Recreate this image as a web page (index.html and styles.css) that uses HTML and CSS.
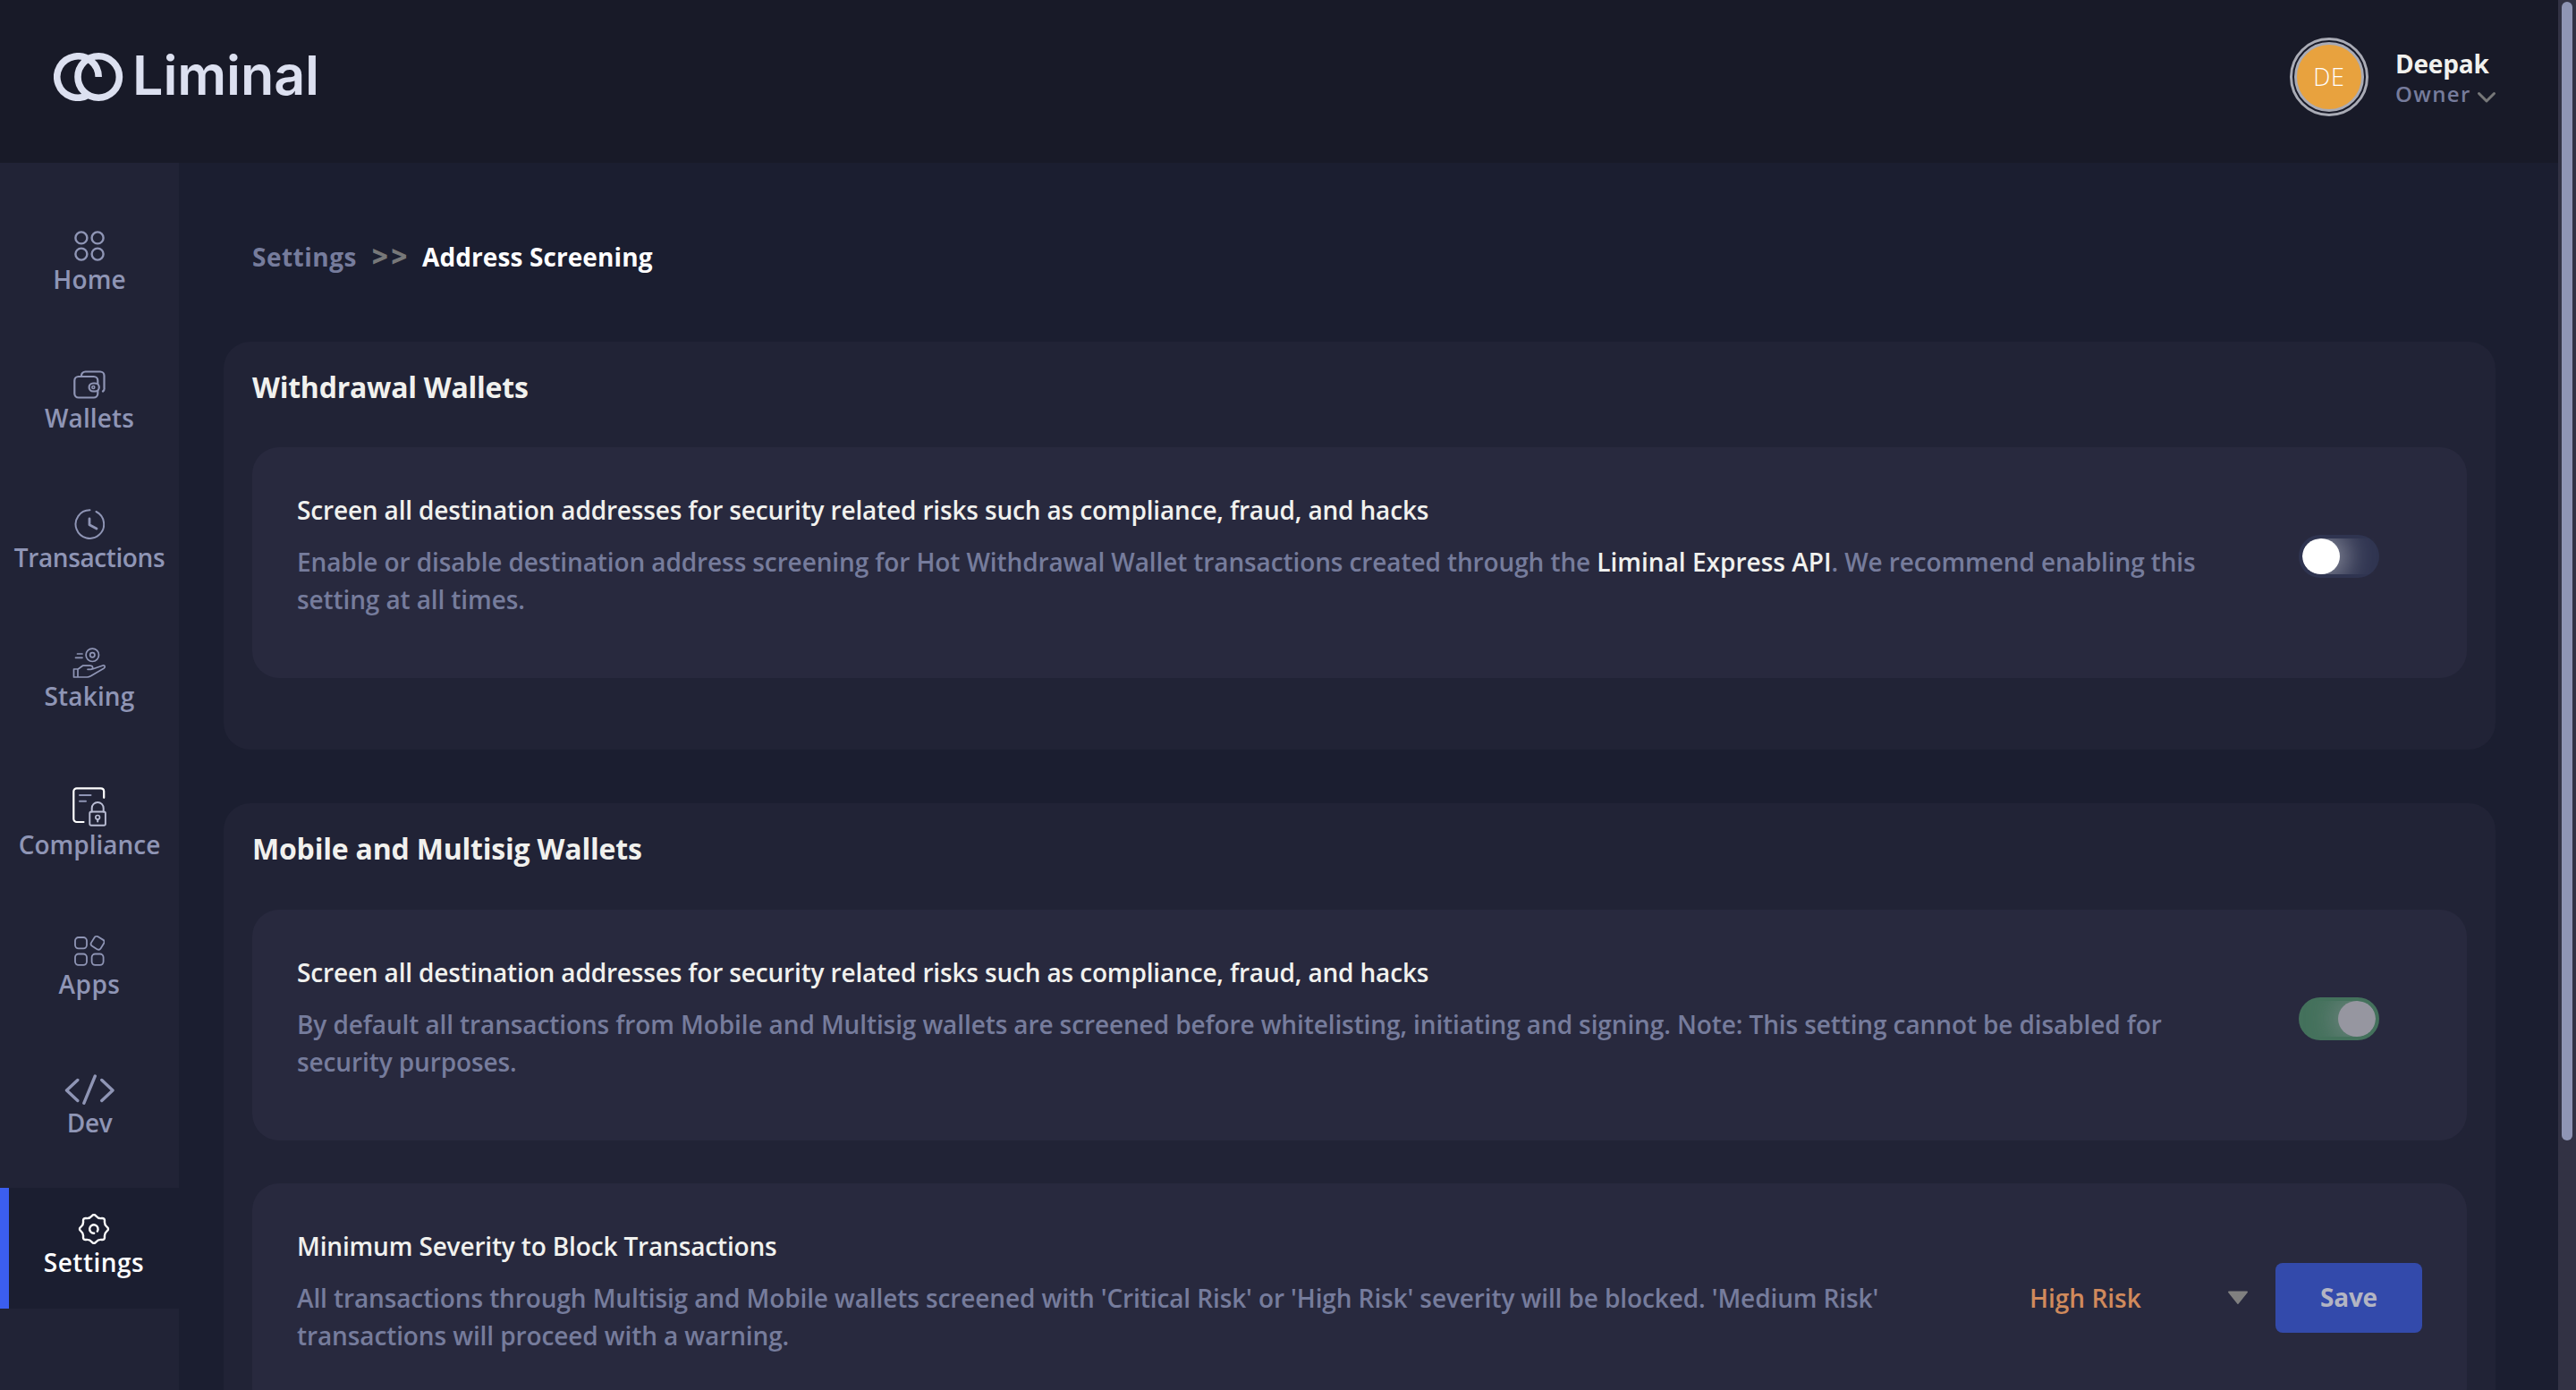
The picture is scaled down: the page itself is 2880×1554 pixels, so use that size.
FILE: index.html
```html
<!DOCTYPE html>
<html lang="en">
<head>
<meta charset="utf-8">
<title>Liminal – Address Screening</title>
<link rel="stylesheet" href="styles.css">
</head>
<body>
<div class="page">
  <div class="app">
    <header class="topbar">
      <div class="logo">
        <svg class="logo-mark" width="78" height="54" viewBox="0 0 78 54" fill="none" stroke="#dce0f0" stroke-width="7.6">
          <path d="M50.2 27A23.2 23.2 0 1 0 38.6 47.1"/>
          <circle cx="50.2" cy="27" r="23.2"/>
        </svg>
        <span class="logo-text">Liminal</span>
      </div>
      <div class="user">
        <div class="avatar"><div class="avatar-face">DE</div></div>
        <div class="user-info">
          <div class="user-name">Deepak</div>
          <div class="user-role">Owner
            <svg width="22" height="14" viewBox="0 0 22 14" fill="none" stroke="#777879" stroke-width="3" stroke-linecap="round" stroke-linejoin="round"><path d="M2.5 2.500L11 11L19.500 2.500"/></svg>
          </div>
        </div>
      </div>
    </header>
    <div class="main">
      <nav class="sidebar">
        <a class="nav-item">
          <svg width="34" height="34" viewBox="0 0 34 34" fill="none" stroke="currentColor" stroke-width="2.4"><circle cx="7.900" cy="7.900" r="6.500"/><circle cx="26.100" cy="7.900" r="6.500"/><circle cx="7.900" cy="26.100" r="6.500"/><circle cx="26.100" cy="26.100" r="6.500"/></svg>
          <span class="nav-label">Home</span>
        </a>
        <a class="nav-item">
          <svg width="36" height="34" viewBox="0 0 36 34" fill="none" stroke="currentColor" stroke-width="2.200" stroke-linecap="round">
            <rect x="1.300" y="8" width="26" height="23.500" rx="4.500"/>
            <path d="M9 7.500V7A4.500 4.500 0 0 1 13.500 2.500H30A4.500 4.500 0 0 1 34.500 7V20.500A4 4 0 0 1 33 24.500"/>
            <rect x="17.600" y="15.500" width="11.200" height="9" rx="4.500" fill="#212336"/>
            <circle cx="22.300" cy="20" r="1.500" stroke-width="1.600"/>
          </svg>
          <span class="nav-label">Wallets</span>
        </a>
        <a class="nav-item">
          <svg width="34" height="34" viewBox="0 0 34 34" fill="none" stroke="currentColor" stroke-width="2" stroke-linecap="round" stroke-linejoin="round">
            <path d="M17.500 1.300A15.800 15.800 0 1 0 24.500 3"/>
            <path d="M17 10.800V17.800L25 22" stroke-width="2.800"/>
          </svg>
          <span class="nav-label tight">Transactions</span>
        </a>
        <a class="nav-item">
          <svg width="38" height="34" viewBox="0 0 38 34" fill="none" stroke="currentColor" stroke-width="1.700" stroke-linecap="round" stroke-linejoin="round">
            <circle cx="22.300" cy="8.300" r="7.200"/><circle cx="22.300" cy="8.300" r="2.600"/>
            <path d="M5.500 7H11M3.500 11.300H11"/>
            <path d="M1.500 24H6V33H1.500ZM6 24.300L11.500 20.200H19.500C23.500 20.200 23.500 24.300 20.500 24.300H17M22.500 24L34 20C36.500 19.500 37 22 35 23.300L20.500 31.800C19 32.700 18 33 16.500 33H6"/>
          </svg>
          <span class="nav-label">Staking</span>
        </a>
        <a class="nav-item tall">
          <svg width="38" height="44" viewBox="0 0 38 44" fill="none" stroke="currentColor" stroke-linecap="round" stroke-linejoin="round">
            <path d="M35.200 11.800V4.500A3.500 3.500 0 0 0 31.700 1.300H5A3.500 3.500 0 0 0 1.300 4.800V35.500A3.500 3.500 0 0 0 4.800 39H12.500" stroke="#fff" stroke-width="2.200"/>
            <path d="M8 9H20.500M8 15.700H15" stroke-width="2"/>
            <rect x="19.300" y="27.500" width="17.600" height="15.300" rx="1.800" stroke="#b9bdd4" stroke-width="1.900"/>
            <path d="M21.700 27.500V23.500A6.500 6.500 0 0 1 34.700 23.500V27.500" stroke="#b9bdd4" stroke-width="2"/>
            <circle cx="28.200" cy="33.800" r="2.300" stroke="#b9bdd4" stroke-width="1.700"/><path d="M28.200 36.300V38.500" stroke="#b9bdd4" stroke-width="2"/>
          </svg>
          <span class="nav-label snug">Compliance</span>
        </a>
        <a class="nav-item">
          <svg width="34" height="34" viewBox="0 0 34 34" fill="none" stroke="currentColor" stroke-width="1.800">
            <rect x="1" y="2" width="13" height="12.400" rx="3.800"/>
            <rect x="19.900" y="2" width="12.400" height="12.400" rx="3" transform="rotate(32 26.100 8.200)"/>
            <rect x="1" y="20.500" width="13" height="12.400" rx="3.800"/>
            <rect x="19.600" y="20.500" width="13" height="12.400" rx="3.800"/>
          </svg>
          <span class="nav-label wide">Apps</span>
        </a>
        <a class="nav-item">
          <svg width="56" height="34" viewBox="0 0 56 34" fill="none" stroke="currentColor" stroke-width="3.400" stroke-linecap="round" stroke-linejoin="round"><path d="M14.800 6.500L2.500 18L14.800 29.500M41.800 6.500L54 18L41.800 29.500M34.300 2L21.800 32.300"/></svg>
          <span class="nav-label tight">Dev</span>
        </a>
        <a class="nav-item active">
          <svg width="36" height="34" viewBox="0 1 36 34" fill="none" stroke="currentColor" stroke-width="2.400" stroke-linecap="round" stroke-linejoin="round">
            <path d="M32.530 15.610Q35.500 18 32.530 20.390T29.960 26.580T26.580 29.960T20.390 32.530T15.610 32.530T9.420 29.960T6.040 26.580T3.470 20.390T3.470 15.610T6.040 9.420T9.420 6.040T15.610 3.470T20.390 3.470T26.580 6.040T29.960 9.420T32.530 15.610Z"/>
            <path d="M21.800 20.600A4.700 4.700 0 1 0 18.200 22.700"/>
          </svg>
          <span class="nav-label wide">Settings</span>
        </a>
      </nav>
      <main class="content">
        <div class="breadcrumb">
          <span class="crumb">Settings</span><span class="crumb-sep">&gt;&gt;</span><span class="crumb-current">Address Screening</span>
        </div>

        <section class="panel">
          <h2 class="panel-title">Withdrawal Wallets</h2>
          <div class="card">
            <div class="card-text">
              <h3 class="card-title">Screen all destination addresses for security related risks such as compliance, fraud, and hacks</h3>
              <p class="card-desc">Enable or disable destination address screening for Hot Withdrawal Wallet transactions created through the <strong class="mark">Liminal Express API</strong>. We recommend enabling this<br>setting at all times.</p>
            </div>
            <div class="toggle"><div class="toggle-track"><div class="toggle-knob"></div></div></div>
          </div>
        </section>

        <section class="panel second">
          <h2 class="panel-title">Mobile and Multisig Wallets</h2>
          <div class="card">
            <div class="card-text">
              <h3 class="card-title">Screen all destination addresses for security related risks such as compliance, fraud, and hacks</h3>
              <p class="card-desc">By default all transactions from Mobile and Multisig wallets are screened before whitelisting, initiating and signing. Note: This setting cannot be disabled for<br>security purposes.</p>
            </div>
            <div class="toggle on"><div class="toggle-track"><div class="toggle-knob"></div></div></div>
          </div>
          <div class="card">
            <div class="card-text">
              <h3 class="card-title">Minimum Severity to Block Transactions</h3>
              <p class="card-desc">All transactions through Multisig and Mobile wallets screened with 'Critical Risk' or 'High Risk' severity will be blocked. 'Medium Risk'<br>transactions will proceed with a warning.</p>
            </div>
            <div class="severity">
              <div class="select"><span>High Risk</span>
                <svg width="24" height="16" viewBox="0 0 24 16"><path d="M2 1.500H22L12 14Z" fill="#808080" stroke="#808080" stroke-width="2" stroke-linejoin="round"/></svg>
              </div>
              <button class="save">Save</button>
            </div>
          </div>
        </section>
      </main>
    </div>
  </div>
  <div class="scrollbar"><div class="scroll-thumb"></div></div>
</div>
</body>
</html>
```
FILE: styles.css
```css
* { box-sizing: border-box; }

body {
  margin: 0;
  background: #1b1e30;
  color: #f1f1ee;
  font-family: "Open Sans", sans-serif;
  font-size: 28px;
  line-height: 42px;
  overflow: hidden;
}

.page { display: flex; height: 1554px; overflow: hidden; }
.app { flex: 1; display: flex; flex-direction: column; min-width: 0; }

/* Header */
.topbar {
  flex: none;
  height: 182px;
  padding: 42px 70px 0 60px;
  background: #181a28;
  display: flex;
  justify-content: space-between;
  align-items: flex-start;
}
.logo { display: flex; padding-top: 17px; }
.logo-text {
  margin: -12px 0 0 10px;
  font: 620 61px/74px Inter, sans-serif;
  letter-spacing: -0.1px;
  color: #dce0f0;
}
.user { display: flex; }
.avatar {
  width: 88px;
  height: 88px;
  padding: 2px;
  border: 3px solid #a9abb5;
  border-radius: 50%;
}
.avatar-face {
  width: 78px;
  height: 78px;
  border: 3px solid #a9abb5;
  border-radius: 50%;
  background: #e8a23e;
  color: #fff;
  font-weight: 360;
  font-size: 27px;
  line-height: 71px;
  letter-spacing: 0.7px;
  text-align: center;
}
.user-info { width: 113px; margin: 0 -1px 0 30px; padding-top: 12px; }
.user-name { font-weight: 700; line-height: 34px; letter-spacing: -0.2px; }
.user-role {
  display: flex;
  align-items: center;
  justify-content: space-between;
  font-weight: 600;
  font-size: 24px;
  line-height: 34px;
  letter-spacing: 1.35px;
  color: #767c9c;
}
.user-role svg { margin-top: 7px; }

/* Navigation */
.main { flex: 1; display: flex; min-height: 0; }
.sidebar {
  flex: none;
  width: 200px;
  padding-top: 46.7px;
  background: #212336;
  display: flex;
  flex-direction: column;
  gap: 20.6px;
}
.nav-item {
  flex: none;
  height: 135px;
  padding-top: 29px;
  display: flex;
  flex-direction: column;
  align-items: center;
  color: #8f95b5;
}
.nav-item.tall { height: 145px; }
.nav-label { padding-top: 1px; font-weight: 600; line-height: 38px; letter-spacing: 0.15px; }
.nav-label.tight { letter-spacing: -0.4px; }
.nav-label.snug { letter-spacing: 0; }
.nav-label.wide { letter-spacing: 0.5px; }
.nav-item.active {
  border-left: 10px solid #3b5eef;
  background: #1b1e30;
  color: #fff;
}

/* Content */
.content { flex: 1; padding: 84px 70px 0 50px; min-width: 0; }
.breadcrumb { display: flex; padding-left: 32px; margin-bottom: 74px; font-weight: 700; }
.crumb { color: #767c9c; letter-spacing: 0.5px; }
.crumb-sep {
  width: 73px;
  font: 700 31px/37px Inter, sans-serif;
  letter-spacing: 0.5px;
  text-align: center;
  color: #777879;
}
.crumb-current { color: #fff; letter-spacing: 0.1px; }

.panel {
  padding: 0 32px 80px;
  margin-bottom: 60px;
  border-radius: 30px;
  background: #212336;
}
.panel-title {
  height: 118px;
  margin: 0;
  padding-top: 29px;
  font-size: 32px;
  line-height: 44px;
  font-weight: 700;
  letter-spacing: -0.25px;
}
.second .panel-title { height: 119px; letter-spacing: -0.2px; }

.card {
  display: flex;
  justify-content: space-between;
  height: 258px;
  padding: 48px 50px 0;
  border-radius: 30px;
  background: #28293e;
}
.card + .card { margin-top: 48px; }
.card-text { padding-top: 1px; white-space: nowrap; }
.card-title {
  margin: 0 0 16px;
  font-size: 28px;
  font-weight: 600;
  line-height: 42px;
  letter-spacing: -0.16px;
}
.card-desc {
  margin: 0;
  font-weight: 600;
  letter-spacing: -0.11px;
  color: #767c9c;
}
.mark { font-weight: 600; letter-spacing: 0; color: #f1f1ee; }

/* Toggle */
.toggle {
  width: 90px;
  height: 48px;
  margin: 50px 48px 0 0;
  padding: 4px;
  border-radius: 24px;
  background: #2f3450;
}
.toggle-track { height: 40px; overflow: hidden; border-radius: 20px 0 0 20px; }
.toggle-knob {
  width: 42px;
  height: 40px;
  border-radius: 50%;
  background: #fff;
  box-shadow: 4px 0 36px rgba(255, 255, 255, 0.75);
}
.toggle.on { background: #44715c; }
.toggle.on .toggle-track { border-radius: 0 20px 20px 0; }
.toggle.on .toggle-knob {
  margin-left: auto;
  background: #9696a0;
  box-shadow: -4px 0 32px rgba(150, 150, 160, 0.7);
}

/* Severity picker */
.severity { display: flex; align-items: flex-start; padding-top: 41px; }
.select {
  width: 245px;
  height: 78px;
  margin-right: 30px;
  display: flex;
  align-items: center;
  justify-content: space-between;
  font-weight: 600;
  color: #d08a5c;
}
.save {
  width: 164px;
  height: 78px;
  padding: 0 0 2px;
  border: 0;
  border-radius: 8px;
  background: #334aab;
  color: #b3b5c3;
  font: 700 28px/42px "Open Sans", sans-serif;
  letter-spacing: -0.25px;
}

/* Scrollbar */
.scrollbar { flex: none; width: 20px; padding: 2px 4px; background: #323244; }
.scroll-thumb { height: 1273px; border-radius: 6px; background: #8f95b5; }
```
